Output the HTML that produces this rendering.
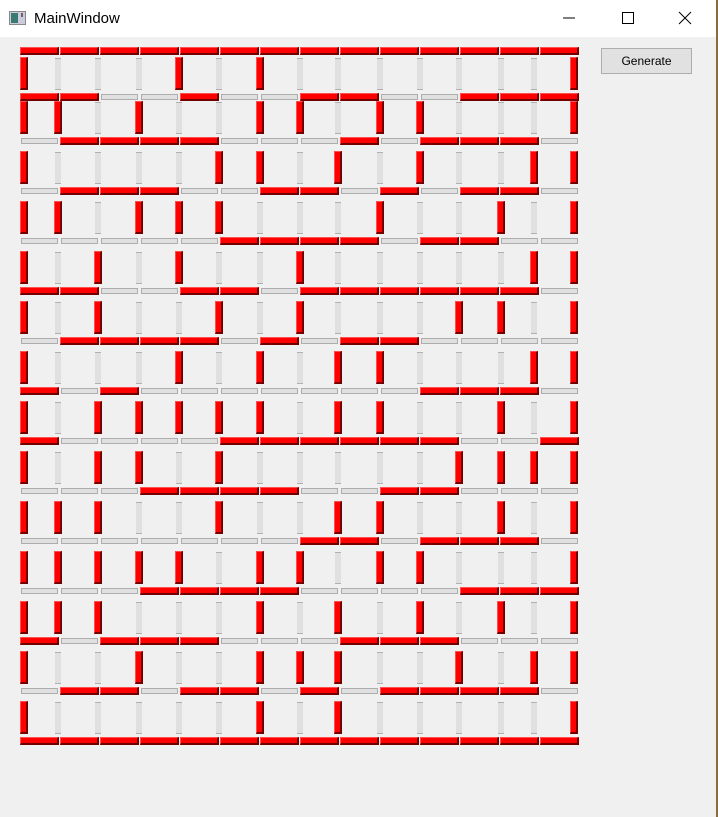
<!DOCTYPE html>
<html><head><meta charset="utf-8"><style>
body{margin:0;width:718px;height:817px;background:#f0f0f0;position:relative;overflow:hidden;font-family:"Liberation Sans",sans-serif}
#tb{position:absolute;left:0;top:0;width:716px;height:37px;background:#fff}
#edge{position:absolute;left:716px;top:0;width:2px;height:817px;background:#8a6a40}
.t{position:absolute;left:34px;top:10px;font-size:15px;color:#000}
.r{position:absolute;background:#ff0000;box-sizing:border-box;border-style:solid;border-width:1px 2px 2px 1px;border-color:#ff5050 #700000 #700000 #ff5050}
.gh{position:absolute;background:#e0e0e0;border:1px solid #adadad;box-sizing:border-box}
.gv{position:absolute;background:#e0e0e0;border-top:1px solid #b0b0b0;border-bottom:1px solid #b0b0b0;box-sizing:border-box}
#btn{position:absolute;left:601px;top:48px;width:91px;height:26px;box-sizing:border-box;border:1px solid #adadad;background:#e1e1e1;font-size:12px;text-align:center;line-height:24px}
</style></head><body>
<div id="tb">
<svg style="position:absolute;left:9px;top:11px" width="17" height="14"><rect x="0.5" y="0.5" width="16" height="13" fill="#ccd" stroke="#888"/><rect x="2" y="2" width="7" height="10" fill="#3a7a70"/><rect x="12" y="2" width="2" height="4" fill="#666"/></svg>
<div class="t">MainWindow</div>
<svg style="position:absolute;left:560px;top:10px" width="140" height="16"><line x1="3" y1="8" x2="15" y2="8" stroke="#000"/><rect x="62.5" y="2.5" width="11" height="11" fill="none" stroke="#000"/><path d="M119 2 L131 14 M131 2 L119 14" stroke="#000"/></svg>
</div>
<div id="edge"></div>
<div id="btn">Generate</div>
<div id="m"></div>
<script>
var H=["11111111111111","11001001100111","01111000101110","01110011010110","00000111101100","11001101111110","01111010110000","10100000001110","10000111111001","00011110011000","00000001101110","00011110000111","10111000111000","01101101011110","11111111111111"];
var V=["100010100000001","110100110110001","100001101010011","110111000100101","101010010000011","101001010001101","100010101100011","101111101100101","101101000001111","111001001100101","111110110110001","111000101010101","100100111001011","100000101000001"];
var vx=[20,54,94,135,175,215,256,296,334,376,416,455,497,530,570];
function hy(k){return k==0?47:k==1?93:137+50*(k-2);}
function vy(k){return k==0?57:k==1?101:151+50*(k-2);}
var s="";
for(var k=0;k<15;k++){for(var c=0;c<14;c++){var x=20+40*c,y=hy(k);
if(H[k][c]=="1")s+='<div class="r" style="left:'+x+'px;top:'+y+'px;width:39px;height:8px"></div>';
else s+='<div class="gh" style="left:'+(x+1)+'px;top:'+(y+1)+'px;width:37px;height:6px"></div>';}}
for(var k=0;k<14;k++){for(var c=0;c<15;c++){var x=vx[c],y=vy(k);
if(V[k][c]=="1")s+='<div class="r" style="left:'+x+'px;top:'+y+'px;width:8px;height:33px"></div>';
else s+='<div class="gv" style="left:'+(x+1)+'px;top:'+(y+1)+'px;width:6px;height:32px"></div>';}}
document.getElementById("m").innerHTML=s;
</script>
</body></html>
